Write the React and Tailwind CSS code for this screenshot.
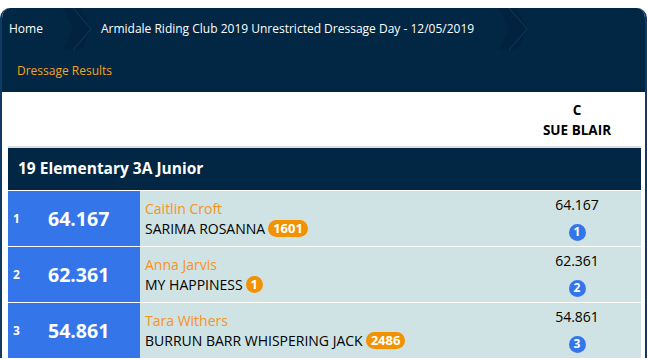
const ROWS = [
  { rank: 1, score: '64.167', rider: 'Caitlin Croft', horse: 'SARIMA ROSANNA', num: '1601', place: 1 },
  { rank: 2, score: '62.361', rider: 'Anna Jarvis', horse: 'MY HAPPINESS', num: '1', place: 2 },
  { rank: 3, score: '54.861', rider: 'Tara Withers', horse: 'BURRUN BARR WHISPERING JACK', num: '2486', place: 3 },
];

function Chevron() {
  return (
    <svg width="30" height="42" viewBox="0 0 30 42" className="shrink-0">
      <path d="M0 0 L18 0 L28 21 L18 42 L0 42 L10 21 Z" fill="#01233f" />
      <path d="M10 0 L28 21 L10 42" fill="none" stroke="#123a5e" strokeWidth="1" />
    </svg>
  );
}

export default function App() {
  return (
    <div className="min-h-screen bg-white pt-2 font-['Open_Sans',sans-serif]">
      <div className="rounded-t-[10px] border-x-2 border-[#0f3a63] overflow-hidden">
        {/* breadcrumb + sub nav */}
        <div className="bg-[#012744]">
          <div className="h-[42px] flex items-center text-[12px] text-white">
            <span className="pl-[7px] pr-[20px]">Home</span>
            <Chevron />
            <span className="pl-[8px] pr-[25px]">Armidale Riding Club 2019 Unrestricted Dressage Day - 12/05/2019</span>
            <Chevron />
          </div>
          <div className="h-[42px] flex items-center pl-[15px] text-[12px] text-[#f5a31a]">
            Dressage Results
          </div>
        </div>

        {/* results table */}
        <div className="bg-white pl-[6px] pr-[4px]">
          <div className="h-[56px] flex border-b-2 border-[#dcdcdc]">
            <div className="flex-1" />
            <div className="w-[128px] flex flex-col items-center justify-center text-[13.5px] font-bold text-black leading-[20px] pt-[1px]">
              <span>C</span>
              <span>SUE BLAIR</span>
            </div>
          </div>
          <div className="h-[42px] bg-[#012744] flex items-center pl-[10px] text-[15.5px] font-bold text-white">
            19 Elementary 3A Junior
          </div>
          {ROWS.map((r) => (
            <div key={r.rank} className="h-[56px] flex border-t border-white">
              <div className="w-[132px] bg-[#3575ea] flex items-center text-white font-bold">
                <span className="w-[40px] pl-[5px] text-[12px]">{r.rank}</span>
                <span className="text-[19.5px]">{r.score}</span>
              </div>
              <div className="flex-1 bg-[#cfe2e4] flex items-center pl-[5px]">
                <div className="flex flex-col text-[14px] leading-[20px]">
                  <span className="text-[#f7931e]">{r.rider}</span>
                  <span className="text-black flex items-center gap-[3px]">
                    {r.horse}
                    <span className={`bg-[#f39200] text-white font-bold text-[13px] leading-[17px] rounded-full ${r.num.length > 1 ? 'px-[5px]' : 'w-[17px] text-center'}`}>
                      {r.num}
                    </span>
                  </span>
                </div>
              </div>
              <div className="w-[128px] bg-[#cfe2e4] flex flex-col items-center justify-center gap-[11px]">
                <span className="text-[14px] leading-[16px] text-black">{r.score}</span>
                <span className="w-[17px] h-[17px] rounded-full bg-[#3575ea] text-white text-[12px] font-bold flex items-center justify-center">
                  {r.place}
                </span>
              </div>
            </div>
          ))}
        </div>
      </div>
    </div>
  );
}
